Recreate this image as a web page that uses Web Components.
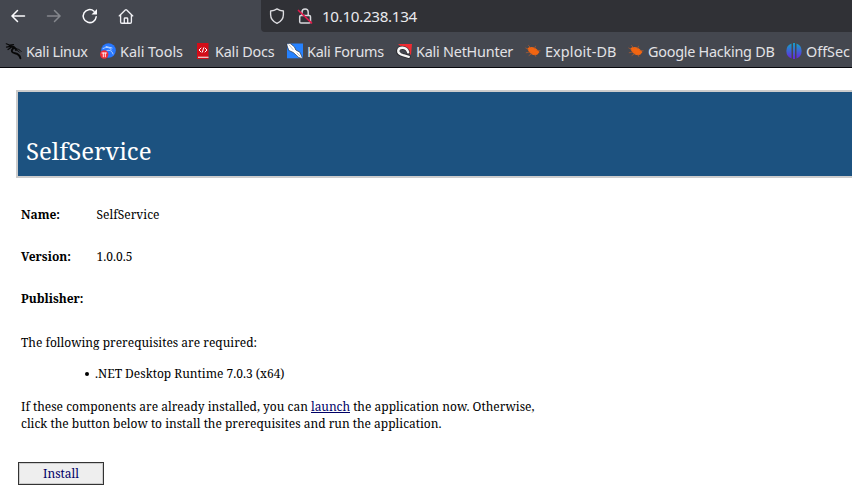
<!DOCTYPE html>
<html lang="en"><head><meta charset="utf-8"><title>SelfService</title>
<style>html,body{margin:0;height:100%;overflow:hidden;background:#fff}</style></head>
<body><app-window></app-window>
<script>
const define=(name,html,setup)=>customElements.define(name,class extends HTMLElement{
  connectedCallback(){if(this.shadowRoot)return;const t=document.createElement('template');t.innerHTML=html;
    this.attachShadow({mode:'open'}).append(t.content.cloneNode(true));if(setup)setup(this);}
});
/* Text run whose letter spacing is tuned to fill the width given in "w". */
define('fit-text',`<style>:host{display:inline-block;white-space:pre}</style><slot></slot>`,el=>{
  const w=+el.getAttribute('w'),n=el.textContent.length;
  el.style.letterSpacing=((w-el.getBoundingClientRect().width)/n)+'px';
});
const icons={
 back:`<path d="M14.500 8H2M7.500 2.500 2 8l5.500 5.500" stroke="#fbfbfe"/>`,
 forward:`<path d="M1.500 8H14M8.500 2.500 14 8l-5.500 5.500" stroke="#85878d"/>`,
 reload:`<path d="M14.200 8.700A6.500 6.500 0 1 1 12 3.200" stroke="#fbfbfe"/><path d="M15 1v5.500H9.500Z" fill="#fbfbfe" stroke="none"/>`,
 home:`<path d="M1.200 7.900 7.300 1.900q.7-.6 1.400 0l6.100 6M2.600 7V14q0 1.200 1.200 1.200h8.400q1.200 0 1.200-1.200V7M6.300 15v-4.200q0-.8.8-.8h1.800q.8 0 .8.8V15" stroke="#f0f0f4" stroke-width="1.350" stroke-linejoin="round"/>`,
 shield:`<path d="M8 .9c2 1.400 4 2 6.400 2.100v3.500c0 4-2.400 7.100-6.400 8.900-4-1.800-6.400-4.900-6.400-8.900V3C4 2.900 6 2.300 8 .9Z" stroke="#dedee2" stroke-width="1.350" stroke-linejoin="round"/>`,
 lock:`<rect x="2.700" y="7.500" width="10.800" height="7.500" rx="1.300" stroke="#d8d8dc"/><path d="M5 7V4a3.100 3.100 0 0 1 6.200 0v3" stroke="#d8d8dc"/><path d="M1.500 2.500 14.500 14.800" stroke="#e2184a" stroke-width="1.700"/>`,
 dragon:`<g stroke="#080808"><path d="M.3.800 4 2.200 7.500 1.600M.5 4.200 4.500 3.300 8 3.800M2 6.500 5 4.500" stroke-width="1.200"/><path d="M3.500 3c3 0 5 1.300 6.500 3.200M7 5.500C4.500 8 6 9.800 9 10.200c3 .6 4.800 2 5.400 5" stroke-width="1.900"/><path d="M9.500 6c2-.4 4 .3 5.700 2.500M9.500 7.300c2-.1 3 .7 4 1.900" stroke-width="1"/></g>`,
 tools:`<circle cx="8.500" cy="7.500" r="7.300" fill="#2777ff" stroke="none"/><path d="M3 5.500c4-2 7-1 8.500 1.500M7 7.500c3-.8 5 .5 6 3.500M6 3.500l6 1.500" stroke="#b9d6ff" stroke-width="1"/><circle cx="4.200" cy="11.500" r="4.200" fill="#f02c36" stroke="none"/><path d="M2 10h4.500M3.300 10v3.800M5.300 10v3.800" stroke="#fff" stroke-width=".9"/>`,
 docs:`<path d="M2 0h11.500v16H2Z" fill="#d30d18" stroke="none"/><path d="M3 14.300H13.500" stroke="#eccaca" stroke-width="1.300" stroke-linecap="butt"/><path d="m6 5-2 2 2 2M10 5l2 2-2 2M8.600 4.900 7.400 9.100" stroke="#fff" stroke-width="1"/>`,
 forums:`<path d="M0 .5h16v14.800H0Z" fill="#2682ff" stroke="none"/><path d="M-.2 1 3 .3 7.500 4l1.300 3 4 2.200 3 6.500-4-1.200-5.500-5L2 7.500Z" fill="#fff" stroke="#333a44" stroke-width=".7"/><path d="m2 2 4 4.500m4 3.500 3 3" stroke="#8b929c" stroke-width=".6"/>`,
 hunter:`<path d="M2 1h14l-1 11Z" fill="#f02b32" stroke="none"/><path d="M12.800 13.800 7 12.200C-.6 10.500 1.500 4.300 6.500 4.800c3 .2 5 1.900 5.700 4.600" stroke="#29292d" stroke-width="3.800"/><path d="M12.800 13.800 7 12.200C-.2 10 1.800 4.600 6.500 4.800c3 .2 5 1.900 5.700 4.600" stroke="#f8f8f8" stroke-width="2.400"/>`,
 bug:`<path d="M2.500 5.500C5.500 2.500 10.500 4.200 13.500 8l1 1-2 2.500C8.500 13.500 3.800 10.500 2.500 5.500Z" fill="#f26511" stroke="none"/><path d="M3.500 6.500.8 5M5 9 1.200 9.700M7 10.500l-3 2M10 11.500l.8 2M12 7.500l3.200.3M9.500 5.500l1-2.300M6 5 3.500 2.500" stroke="#b65c2b" stroke-width=".7"/>`,
 offsec:`<defs><linearGradient id="g" x2="0" y2="1"><stop stop-color="#14a1c8"/><stop offset="1" stop-color="#6725df"/></linearGradient></defs><g fill="url(#g)" stroke="none"><path d="M5.500.6v14.800A7.900 7.900 0 0 1 5.500.6ZM10.500.6v14.800A7.900 7.900 0 0 0 10.500.6Z"/><rect x="7" y="0" width="2" height="16"/></g>`};
define('ui-icon',`<style>:host{display:block;width:16px;height:16px;flex:none}svg{display:block;overflow:visible}</style><svg width="16" height="16" viewBox="0 0 16 16" fill="none" stroke-width="1.500" stroke-linecap="round"></svg>`,
 el=>el.shadowRoot.querySelector('svg').innerHTML=icons[el.getAttribute('name')]);
define('nav-bar',`<style>:host{display:flex;height:35px;background:#44474f;color:#e9e9ed;font:15.200px "Noto Sans",sans-serif}
 nav{display:flex;width:261px;box-sizing:border-box;padding:8px 0 0 10px;gap:20px}
 .url{flex:1;height:32px;box-sizing:border-box;background:#303136;border-radius:0 0 0 4px;display:flex;align-items:center;padding:0 0 0 8px;gap:12px}
 fit-text{margin-left:-3px;line-height:20px}</style>
 <nav><ui-icon name="back"></ui-icon><ui-icon name="forward"></ui-icon><ui-icon name="reload"></ui-icon><ui-icon name="home"></ui-icon></nav>
 <div class="url"><ui-icon name="shield"></ui-icon><ui-icon name="lock"></ui-icon><fit-text w="95">10.10.238.134</fit-text></div>`);
define('book-mark',`<style>:host{display:flex;align-items:center;gap:4px;flex:none}</style><ui-icon></ui-icon><slot></slot>`,el=>{
  const old=el.shadowRoot.querySelector('ui-icon'),i=document.createElement('ui-icon');i.setAttribute('name',el.getAttribute('icon'));old.replaceWith(i);
  el.style.width=el.getAttribute('span')+'px';});
define('bookmark-bar',`<style>:host{display:flex;align-items:center;height:33px;box-sizing:border-box;padding-left:6px;background:#44474f;border-bottom:1px solid #08080d;color:#e2e2e6;font:14.400px/20px "Noto Sans",sans-serif;overflow:hidden}fit-text{padding-top:2px}</style>
 <book-mark icon="dragon" span="94"><fit-text w="61.500">Kali Linux</fit-text></book-mark>
 <book-mark icon="tools" span="95"><fit-text w="63">Kali Tools</fit-text></book-mark>
 <book-mark icon="docs" span="92"><fit-text w="59.500">Kali Docs</fit-text></book-mark>
 <book-mark icon="forums" span="109"><fit-text w="77">Kali Forums</fit-text></book-mark>
 <book-mark icon="hunter" span="129"><fit-text w="97">Kali NetHunter</fit-text></book-mark>
 <book-mark icon="bug" span="103"><fit-text w="71.500">Exploit-DB</fit-text></book-mark>
 <book-mark icon="bug" span="158"><fit-text w="126.500">Google Hacking DB</fit-text></book-mark>
 <book-mark icon="offsec" span="70"><fit-text w="44">OffSec</fit-text></book-mark>`);
define('page-banner',`<style>:host{display:flex;align-items:flex-end;height:88px;box-sizing:border-box;margin:22px 0 0 16px;border:2px solid #ccc;border-right:0;background:#1c5280;color:#fff;padding:0 8px 9px;font-size:24px;line-height:33px}</style><slot></slot>`);
define('info-row',`<style>:host{display:grid;grid-template-columns:75.500px auto;height:42px;line-height:18px}b{font-weight:700}</style><b><slot name="label"></slot></b><span><slot></slot></span>`);
define('install-button',`<style>:host{display:flex;align-items:center;justify-content:center;width:86px;height:23px;box-sizing:border-box;border:1px solid #333;box-shadow:inset 0 0 0 1px #ccc;background:#eee;color:#000066}</style><slot></slot>`);
define('install-page',`<style>:host{display:block;font:12px/17px "Noto Serif","Droid Serif","Liberation Serif",serif;color:#000}
 main{padding:28px 0 0 21px}.intro{margin-top:2px}ul{margin:14px 0 16px;padding:0 0 0 74px}li{line-height:17px;list-style:none;display:flex;align-items:center}
 li::before{content:"";width:4px;height:4px;border-radius:50%;background:#000;margin:1px 6px 0 -10px}
 a fit-text{color:#000066;text-decoration:underline}p{margin:0;white-space:nowrap}install-button{margin:30px 0 0 -3px}</style>
 <page-banner><fit-text w="125.500">SelfService</fit-text></page-banner>
 <main><info-row><fit-text w="39" slot="label">Name:</fit-text><fit-text w="63">SelfService</fit-text></info-row>
 <info-row><fit-text w="50" slot="label">Version:</fit-text><fit-text w="36">1.0.0.5</fit-text></info-row>
 <info-row><fit-text w="62.500" slot="label">Publisher:</fit-text></info-row>
 <p class="intro"><fit-text w="236">The following prerequisites are required:</fit-text></p>
 <ul><li><fit-text w="189.500">.NET Desktop Runtime 7.0.3 (x64)</fit-text></li></ul>
 <p><fit-text w="290">If these components are already installed, you can </fit-text><a href="#"><fit-text w="39">launch</fit-text></a><fit-text w="184.500">&nbsp;the application now. Otherwise,</fit-text></p>
 <p><fit-text w="420.500">click the button below to install the prerequisites and run the application.</fit-text></p>
 <install-button><fit-text w="36">Install</fit-text></install-button></main>`);
define('app-window',`<style>:host{display:block}</style><nav-bar></nav-bar><bookmark-bar></bookmark-bar><install-page></install-page>`);
</script></body></html>
